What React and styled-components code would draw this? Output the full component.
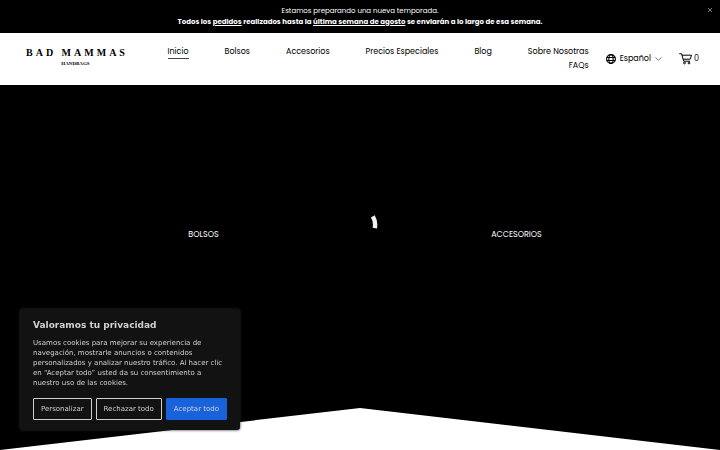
import React from "react";
import styled, { createGlobalStyle } from "styled-components";

const navLinks = [
  "Inicio",
  "Bolsos",
  "Accesorios",
  "Precios Especiales",
  "Blog",
  "Sobre Nosotras",
  "FAQs",
];

const App = () => {
  return (
    <>
      <GlobalStyle />
      <Page>
        <Announcement>
          <p>Estamos preparando una nueva temporada.</p>
          <p>
            <strong>
              Todos los <u>pedidos</u> realizados hasta la{" "}
              <u>última semana de agosto</u> se enviarán a lo largo de esa
              semana.
            </strong>
          </p>
          <CloseButton type="button" aria-label="Cerrar">
            <svg width="4" height="4" viewBox="0 0 4 4">
              <path d="M0 0L4 4M4 0L0 4" stroke="#fff" strokeWidth="0.5" />
            </svg>
          </CloseButton>
        </Announcement>

        <Header>
          <Logo href="#inicio">
            <LogoName>BAD MAMMAS</LogoName>
            <LogoTag>HANDBAGS</LogoTag>
          </Logo>
          <Nav>
            {navLinks.map((label, i) => (
              <NavLink key={label} href={`#${label}`} $active={i === 0}>
                {label}
              </NavLink>
            ))}
          </Nav>
          <Language type="button">
            <GlobeIcon />
            Español
            <svg width="7" height="4" viewBox="0 0 7 4" fill="none">
              <path d="M0.4 0.5L3.5 3.2L6.6 0.5" stroke="#000" strokeWidth="0.5" />
            </svg>
          </Language>
          <Cart href="#cart" aria-label="Carrito, 0 artículos">
            <CartIcon />
            <span>0</span>
          </Cart>
        </Header>

        <Hero>
          <Category href="#bolsos">BOLSOS</Category>
          <Category href="#accesorios">ACCESORIOS</Category>
          <Spinner width="36" height="36" viewBox="0 0 36 36" fill="none">
            <path d="M30.8 9.4Q34 14.6 32.8 21.2" stroke="#f2f2f2" strokeWidth="4.4" />
          </Spinner>
        </Hero>
      </Page>

      <Consent role="dialog" aria-labelledby="consent-title">
        <ConsentTitle id="consent-title">Valoramos tu privacidad</ConsentTitle>
        <ConsentText>
          Usamos cookies para mejorar su experiencia de navegación, mostrarle
          anuncios o contenidos personalizados y analizar nuestro tráfico. Al
          hacer clic en “Aceptar todo” usted da su consentimiento a nuestro uso
          de las cookies.
        </ConsentText>
        <ConsentActions>
          <ConsentButton type="button">Personalizar</ConsentButton>
          <ConsentButton type="button">Rechazar todo</ConsentButton>
          <ConsentButton type="button" $primary>
            Aceptar todo
          </ConsentButton>
        </ConsentActions>
      </Consent>
    </>
  );
};

const GlobeIcon = () => (
  <svg width="10" height="10" viewBox="0 0 20 20" fill="none" stroke="#000" strokeWidth="2.2">
    <circle cx="10" cy="10" r="8.8" />
    <ellipse cx="10" cy="10" rx="4.4" ry="8.8" />
    <path d="M1.6 7h16.8M1.6 13h16.8" />
  </svg>
);

const CartIcon = () => (
  <svg width="13" height="12" viewBox="0 0 26 24" fill="none" stroke="#000" strokeWidth="2">
    <path d="M0.5 1.5H5L9.4 16.4H22" />
    <path d="M5.8 4.4H25L22.4 12.4H8.4" />
    <circle cx="11" cy="20" r="1.8" />
    <circle cx="20" cy="20" r="1.8" />
  </svg>
);

const GlobalStyle = createGlobalStyle`
  * {
    box-sizing: border-box;
  }

  body {
    margin: 0;
    background: #fff;
    font-family: Poppins, Inter, sans-serif;
    font-size: 8px;
    color: #000;
  }

  p,
  h2 {
    margin: 0;
  }

  a {
    color: inherit;
    text-decoration: none;
  }

  button {
    font: inherit;
    cursor: pointer;
  }

  svg {
    display: block;
    flex-shrink: 0;
  }
`;

const Page = styled.div`
  display: flex;
  flex-direction: column;
  min-height: 100vh;
`;

const Announcement = styled.div`
  position: relative;
  padding: 5px 24px 6px;
  background: #000;
  color: #fff;
  font-size: 7px;
  line-height: 11px;
  text-align: center;
`;

const CloseButton = styled.button`
  position: absolute;
  top: 4px;
  right: 4px;
  padding: 4px;
  border: 0;
  background: none;
`;

const Header = styled.header`
  display: flex;
  align-items: center;
  gap: 17px;
  padding: 12px 21px 12px 26px;
  background: #fff;
  line-height: 14px;
`;

const Logo = styled.a`
  display: flex;
  flex-direction: column;
  align-items: center;
  gap: 3px;
  padding-bottom: 3px;
  font-family: "Liberation Serif", serif;
  font-weight: bold;
  white-space: nowrap;
`;

const LogoName = styled.span`
  margin-right: -3px;
  font-size: 10px;
  line-height: 10px;
  letter-spacing: 3px;
`;

const LogoTag = styled.span`
  font-size: 5px;
  line-height: 6px;
`;

const Nav = styled.nav`
  display: flex;
  flex: 1;
  flex-wrap: wrap;
  justify-content: flex-end;
  column-gap: 36px;
`;

const NavLink = styled.a`
  box-shadow: ${({ $active }) => ($active ? "inset 0 -1px 0 #444" : "none")};
`;

const Language = styled.button`
  display: flex;
  align-items: center;
  gap: 4px;
  padding: 0;
  border: 0;
  background: none;
  color: #000;
`;

const Cart = styled.a`
  display: flex;
  align-items: center;
  gap: 2px;
`;

/* black band whose lower edge rises to a peak in the middle */
const Hero = styled.main`
  position: relative;
  display: grid;
  flex: 1;
  grid-template-columns: 1fr 1fr;
  align-items: center;
  justify-items: center;
  min-height: 240px;
  padding: 0 47px 65px;
  background: #000;
  color: #fff;
  clip-path: polygon(0 0, 100% 0, 100% 100%, 50% calc(100% - 42px), 0 100%);
`;

const Category = styled.a`
  line-height: 12px;
`;

const Spinner = styled.svg`
  position: absolute;
  top: 122px;
  left: calc(50% - 18px);
`;

const Consent = styled.section`
  position: fixed;
  left: 20px;
  bottom: 20px;
  width: 220px;
  padding: 11px 13px 10px;
  border-radius: 3px;
  background: #121212;
  color: #d0d0d0;
  box-shadow: 0 0 3px #2a2a2a;
  font-family: "DejaVu Sans", sans-serif;
  font-size: 7px;
`;

const ConsentTitle = styled.h2`
  margin-bottom: 7px;
  font-size: 9px;
  line-height: 11px;
`;

const ConsentText = styled.p`
  margin-bottom: 10px;
  line-height: 10px;
`;

const ConsentActions = styled.div`
  display: flex;
  gap: 4px;
`;

const ConsentButton = styled.button`
  flex: 1 0 auto;
  padding: 5px 6px;
  border: 1px solid ${({ $primary }) => ($primary ? "#1863dc" : "#d0d0d0")};
  border-radius: 1px;
  background: ${({ $primary }) => ($primary ? "#1863dc" : "transparent")};
  color: #d0d0d0;
  line-height: 10px;
  white-space: nowrap;
`;

export default App;
